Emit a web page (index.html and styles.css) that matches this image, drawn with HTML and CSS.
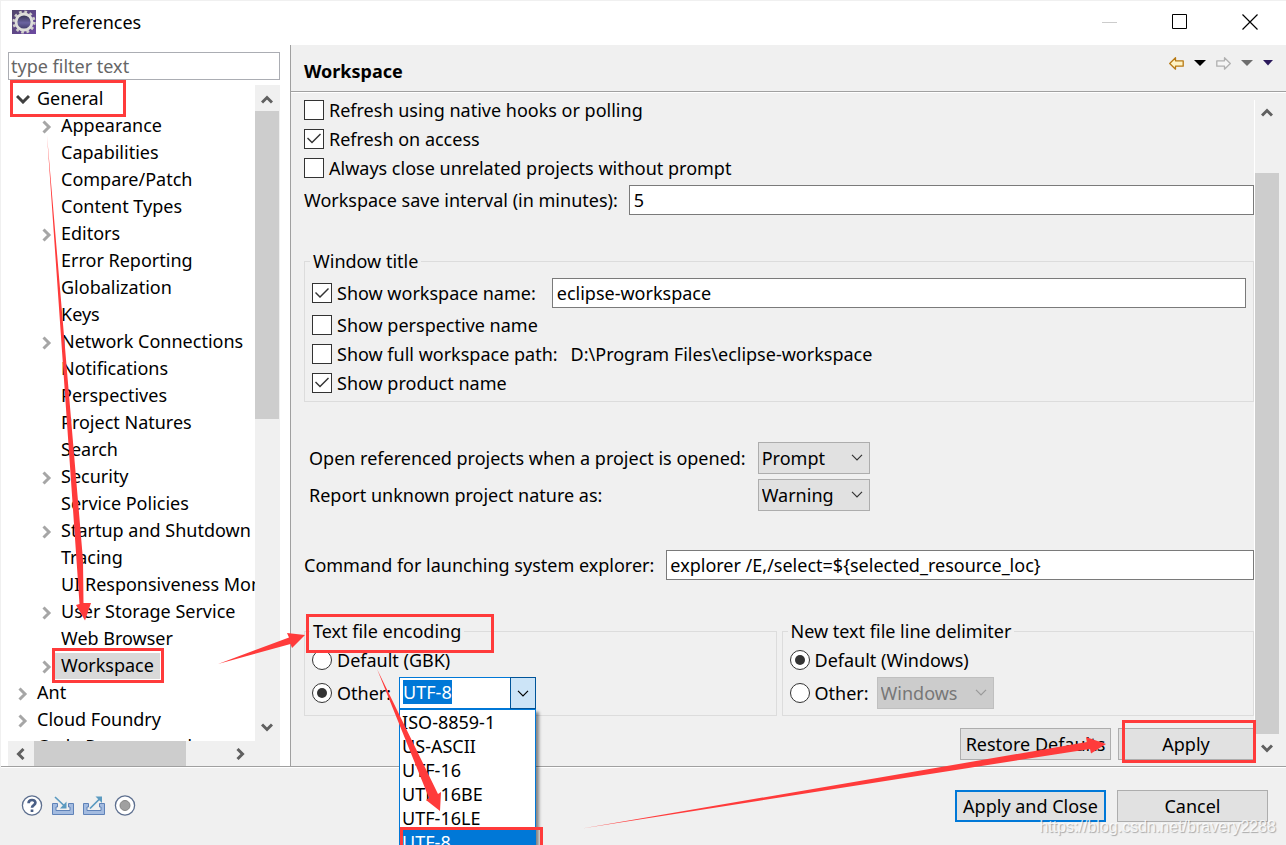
FILE: index.html
```html
<!DOCTYPE html>
<html lang="en">
<head>
<meta charset="utf-8">
<title>Preferences</title>
<link rel="stylesheet" href="styles.css">
</head>
<body>
<svg class="defs" aria-hidden="true">
  <symbol id="right" viewBox="0 0 10 14"><path d="M1.500 1.500 7 7l-5.500 5.500" fill="none" stroke="#a6a6a6" stroke-width="3"/></symbol>
  <symbol id="down" viewBox="0 0 14 10"><path d="M1 2l6 6 6-6" fill="none" stroke="#404040" stroke-width="3"/></symbol>
  <symbol id="sb" viewBox="0 0 12 10"><path d="M1 7.500l5-5 5 5" fill="none" stroke="#606060" stroke-width="3"/></symbol>
  <symbol id="thin" viewBox="0 0 12 7"><path d="M1 .8l5 5 5-5" fill="none" stroke="currentColor" stroke-width="1.200"/></symbol>
</svg>
<div class="window">
  <header class="titlebar">
    <svg class="app-icon" viewBox="0 0 24 24">
      <defs>
        <linearGradient id="pg" x1="0" y1="0" x2="1" y2="1"><stop offset="0" stop-color="#51466a"/><stop offset="1" stop-color="#6d4aa3"/></linearGradient>
        <linearGradient id="core" x1="0" y1="0" x2="0" y2="1"><stop offset="0" stop-color="#2d2b45"/><stop offset=".55" stop-color="#6a63a0"/><stop offset="1" stop-color="#3a3560"/></linearGradient>
      </defs>
      <rect width="24" height="24" fill="url(#pg)"/>
      <circle cx="12" cy="12" r="10.300" fill="none" stroke="#d0d0ca" stroke-width="2.600" stroke-dasharray="2.700 2.700"/>
      <circle cx="12" cy="12" r="8" fill="url(#core)" stroke="#dededa" stroke-width="2.800"/>
    </svg>
    <h1>Preferences</h1>
    <div class="controls">
      <button aria-label="Minimize"><svg width="16" height="16"><path d="M0 8.500h15" stroke="#ccc"/></svg></button>
      <button aria-label="Maximize"><svg width="16" height="16"><path d="M.5.5h14v14H.5z" fill="none" stroke="#000"/></svg></button>
      <button aria-label="Close"><svg width="16" height="16"><path d="M.5.5l15 15M15.500.5l-15 15" stroke="#000" stroke-width="1.200"/></svg></button>
    </div>
  </header>
  <div class="main">
    <nav class="side">
      <input class="filter" type="text" placeholder="type filter text" aria-label="Filter preferences">
      <div class="tree-area">
        <ul class="tree">
          <li class="root"><svg class="open"><use href="#down"/></svg><span>General</span></li>
          <li><svg><use href="#right"/></svg><span>Appearance</span></li>
          <li><span>Capabilities</span></li>
          <li><span>Compare/Patch</span></li>
          <li><span>Content Types</span></li>
          <li><svg><use href="#right"/></svg><span>Editors</span></li>
          <li><span>Error Reporting</span></li>
          <li><span>Globalization</span></li>
          <li><span>Keys</span></li>
          <li><svg><use href="#right"/></svg><span>Network Connections</span></li>
          <li><span>Notifications</span></li>
          <li><span>Perspectives</span></li>
          <li><span>Project Natures</span></li>
          <li><span>Search</span></li>
          <li><svg><use href="#right"/></svg><span>Security</span></li>
          <li><span>Service Policies</span></li>
          <li><svg><use href="#right"/></svg><span>Startup and Shutdown</span></li>
          <li><span>Tracing</span></li>
          <li><span>UI Responsiveness Monitoring</span></li>
          <li><svg><use href="#right"/></svg><span>User Storage Service</span></li>
          <li><span>Web Browser</span></li>
          <li class="selected"><svg><use href="#right"/></svg><span>Workspace</span></li>
          <li class="root"><svg><use href="#right"/></svg><span>Ant</span></li>
          <li class="root"><svg><use href="#right"/></svg><span>Cloud Foundry</span></li>
          <li class="root"><svg><use href="#right"/></svg><span>Code Recommenders</span></li>
        </ul>
        <div class="vbar tree-vbar"><svg><use href="#sb"/></svg><i></i><svg class="flip"><use href="#sb"/></svg></div>
      </div>
      <div class="hbar"><svg class="left"><use href="#sb"/></svg><i></i><svg class="rightward"><use href="#sb"/></svg></div>
    </nav>
    <section class="page">
      <header class="page-head">
        <h2>Workspace</h2>
        <div class="history">
          <button aria-label="Back"><svg width="15" height="13"><path d="M.7 6.500 6.500.8v3h7.700v5.400H6.500v3z" fill="#fff3c4" stroke="#b87a14" stroke-width="1.300" stroke-linejoin="round"/></svg></button>
          <button aria-label="Back history"><svg width="12" height="6"><path d="M0 0h12L6 6z"/></svg></button>
          <button aria-label="Forward"><svg width="15" height="13"><path d="M14.300 6.500 8.500.8v3H.8v5.400h7.700v3z" fill="#f5f5f5" stroke="#b0b0b0" stroke-width="1.300" stroke-linejoin="round"/></svg></button>
          <button aria-label="Forward history"><svg width="12" height="6"><path d="M0 0h12L6 6z" fill="#6e6e6e"/></svg></button>
          <button aria-label="Menu"><svg width="10" height="6"><path d="M0 0h10L5 5.500z" fill="#2b1a5c"/></svg></button>
        </div>
      </header>
      <div class="page-body">
        <form class="form">
          <label class="check"><input type="checkbox">Refresh using native hooks or polling</label>
          <label class="check"><input type="checkbox" checked>Refresh on access</label>
          <label class="check"><input type="checkbox">Always close unrelated projects without prompt</label>
          <div class="field interval"><label for="interval">Workspace save interval (in minutes):</label><input class="text" id="interval" type="text" value="5"></div>
          <fieldset class="title-group">
            <legend>Window title</legend>
            <div class="field name-row"><label class="check"><input type="checkbox" checked>Show workspace name:</label><input class="text" type="text" value="eclipse-workspace" aria-label="Workspace name"></div>
            <label class="check"><input type="checkbox">Show perspective name</label>
            <div class="path-row"><label class="check"><input type="checkbox">Show full workspace path:</label><span>D:\Program Files\eclipse-workspace</span></div>
            <label class="check"><input type="checkbox" checked>Show product name</label>
          </fieldset>
          <div class="choices">
            <label for="referenced">Open referenced projects when a project is opened:</label>
            <div class="pick"><select id="referenced"><option>Prompt</option></select><svg><use href="#thin"/></svg></div>
            <label for="nature">Report unknown project nature as:</label>
            <div class="pick"><select id="nature"><option>Warning</option></select><svg><use href="#thin"/></svg></div>
          </div>
          <div class="field command"><label for="command">Command for launching system explorer:</label><input class="text" id="command" type="text" value="explorer /E,/select=${selected_resource_loc}"></div>
          <div class="groups">
            <fieldset>
              <legend>Text file encoding</legend>
              <label class="check"><input type="radio" name="enc">Default (GBK)</label>
              <div class="other-row">
                <label class="check"><input type="radio" name="enc" checked>Other:</label>
                <div class="combo">
                  <div class="combo-value" role="combobox" aria-expanded="true" aria-label="Encoding" tabindex="0"><span>UTF-8</span></div>
                  <button type="button" aria-label="Show encodings"><svg><use href="#thin"/></svg></button>
                  <ul class="popup" role="listbox">
                    <li role="option">ISO-8859-1</li>
                    <li role="option">US-ASCII</li>
                    <li role="option">UTF-16</li>
                    <li role="option">UTF-16BE</li>
                    <li role="option">UTF-16LE</li>
                    <li role="option" class="active" aria-selected="true">UTF-8</li>
                  </ul>
                </div>
              </div>
            </fieldset>
            <fieldset>
              <legend>New text file line delimiter</legend>
              <label class="check"><input type="radio" name="delim" checked>Default (Windows)</label>
              <div class="other-row">
                <label class="check"><input type="radio" name="delim">Other:</label>
                <div class="pick disabled"><select disabled aria-label="Line delimiter"><option>Windows</option></select><svg><use href="#thin"/></svg></div>
              </div>
            </fieldset>
          </div>
          <div class="actions"><button class="btn restore" type="button">Restore Defaults</button><button class="btn apply" type="button">Apply</button></div>
        </form>
        <div class="vbar page-vbar"><svg><use href="#sb"/></svg><i></i><svg class="flip"><use href="#sb"/></svg></div>
      </div>
    </section>
  </div>
  <footer class="footer">
    <div class="tools">
      <button aria-label="Help"><svg width="22" height="22"><circle cx="11" cy="10.500" r="9.600" fill="#fff" stroke="#5d6f8f" stroke-width="1.300"/><path d="M7.600 8.200C7.600 4 14.400 4 14.400 7.800 14.400 10.200 11 10 11 12.800M11 14.400v2.600" fill="none" stroke="#4a5f86" stroke-width="2.700"/></svg></button>
      <button aria-label="Import"><svg width="22" height="22"><path d="M5.500 8.500h-5v11h21v-11h-5V12h1.500v3.500H4V12h1.500z" fill="#a3bbe0" stroke="#5f82b8"/><path d="M3 2l9.500 9" stroke="#5b9ac0" stroke-width="1.700"/><path d="M14.500 6.500v7H8z" fill="#5b9ac0"/></svg></button>
      <button aria-label="Export"><svg width="22" height="22"><path d="M5.500 8.500h-5v11h21v-11h-5V12h1.500v3.500H4V12h1.500z" fill="#a3bbe0" stroke="#5f82b8"/><path d="M7 13.500L17 3.500" stroke="#5b9ac0" stroke-width="1.700"/><path d="M12.500 1.500H19V8z" fill="#5b9ac0"/></svg></button>
      <button aria-label="Record"><svg width="22" height="22"><circle cx="11" cy="10.500" r="9.600" fill="#fff" stroke="#5d6f8f" stroke-width="1.300"/><circle cx="11" cy="10.500" r="5" fill="#a0a0a0" stroke="#858585"/></svg></button>
    </div>
    <div class="final"><button class="btn primary">Apply and Close</button><button class="btn">Cancel</button></div>
  </footer>
  <div class="watermark">https://blog.csdn.net/bravery2288</div>
  <svg class="marks" width="1286" height="845" aria-hidden="true">
    <g fill="none" stroke="#ff3b3b" stroke-width="3">
      <path d="M11.500 81.500h113v34h-113zM53.500 649.500h109v32h-109zM307.500 615.500h185v36h-185zM1123.500 721.500h131v40h-131zM401.500 828.500h140v20h-140z"/>
    </g>
    <g fill="#ff3b3b">
      <path d="M47 135L83 560 83.500 603 91 603 85 620.500 76 605 79.500 604 76.500 560z"/>
      <path d="M218 664L289 637.500 287 633 305 635 292 648 290.500 644z"/>
      <path d="M377 669L438 794 441 792 440 811 426 800 429 798z"/>
      <path d="M582 828.500L1087 742 1086 737 1106 744 1091 753.500 1090 749z"/>
    </g>
  </svg>
</div>
</body>
</html>
```

FILE: styles.css
```css
* { box-sizing: border-box; }
body, input, select, button { font-family: "Noto Sans", "Open Sans", sans-serif; font-size: 18px; line-height: 24px; color: #000; }
body { margin: 0; background: #f0f0f0; }
ul { list-style: none; margin: 0; padding: 0; }
button { border: 0; padding: 0; background: none; }
h1, h2 { margin: 0; font-size: 18px; }
svg { display: block; flex: none; }
.defs { position: absolute; width: 0; height: 0; }
.window { position: relative; display: flex; flex-direction: column; min-height: 100vh; overflow: hidden; border-left: 1px solid #f0f0f0; }

.titlebar { display: flex; align-items: center; height: 45px; padding: 0 28px 2px 11px; background: #fff; border-top: 1px solid #f0f0f0; }
.app-icon { width: 24px; height: 24px; }
.titlebar h1 { margin-left: 5px; font-weight: 400; }
.controls { display: flex; gap: 54px; margin-left: auto; }

.main { display: flex; flex: 1; border-bottom: 1px solid #a0a0a0; box-shadow: 0 1px #fff; }
.side { display: flex; flex-direction: column; width: 290px; padding: 7px 10px 0 7px; background: #fff; border-right: 1px solid #a0a0a0; }
.filter { height: 28px; padding: 0 2px; border: 1px solid #abadb3; outline: 0; }
.filter::placeholder { color: #666; opacity: 1; }
.tree-area { display: flex; flex: 1 1 0; min-height: 0; margin-top: 5px; }
.tree { flex: 1; min-width: 0; overflow: hidden; }
.tree li { position: relative; height: 27px; padding: 1px 0 0 51px; white-space: nowrap; }
.tree li.root { padding-left: 27px; }
.tree li svg { position: absolute; left: 34px; top: 8px; width: 10px; height: 14px; }
.tree li.root svg { left: 10px; }
.tree li.root svg.open { left: 8px; top: 9px; width: 14px; height: 10px; }
.tree li span { display: inline-block; padding: 0 2px; }
.tree .selected span { height: 26px; padding: 0 6px 0 6px; margin-left: -4px; background: #d9d9d9; }

.vbar { display: flex; flex-direction: column; align-items: center; width: 25px; background: #f0f0f0; }
.vbar svg, .hbar svg { width: 12px; height: 10px; }
.vbar i, .hbar i { background: #cdcdcd; }
.vbar i { width: 24px; }
.flip { margin-top: auto; transform: rotate(180deg); }
.tree-vbar { padding: 10px 1px 9px 0; }
.tree-vbar i { height: 308px; margin-top: 6px; }
.hbar { display: flex; align-items: center; height: 25px; padding: 0 34px 0 7px; background: #f0f0f0; }
.hbar i { width: 152px; height: 25px; margin-left: 7px; }
.hbar .left { transform: rotate(-90deg); }
.hbar .rightward { margin-left: auto; transform: rotate(90deg); }

.page { display: flex; flex: 1; flex-direction: column; min-width: 0; }
.page-head { display: flex; align-items: center; justify-content: space-between; height: 47px; padding: 5px 13px 0 13px; border-bottom: 1px solid #a0a0a0; box-shadow: 0 1px #fff; }
.history { display: flex; align-items: center; gap: 10px; height: 24px; padding-bottom: 15px; }
.page-body { display: flex; flex: 1; padding: 3px 7px 4px 13px; }
.form { flex: 1; min-width: 0; }
.check { display: flex; align-items: center; gap: 5px; height: 29px; white-space: nowrap; }
.check input { appearance: none; position: relative; flex: none; width: 20px; height: 20px; margin: 0; background: #fff; border: 1px solid #333; }
.check input[type="radio"] { border-radius: 50%; }
.check input:checked::after { content: ""; position: absolute; inset: 0; background: #333; clip-path: polygon(2px 9px, 3px 8px, 7px 12px, 15px 4px, 16px 5px, 7px 14px); }
.check input[type="radio"]:checked::after { inset: 4px; border-radius: 50%; clip-path: none; }
.text { flex: 1; min-width: 0; height: 30px; padding: 0 4px; border: 1px solid #7a7a7a; background: #fff; outline: 0; }
.field { display: flex; align-items: center; white-space: nowrap; }
.field label { flex: none; }
.interval { gap: 11px; margin-top: 3px; }
fieldset { min-width: 0; margin: 0; padding: 0 7px 4px; border: 1px solid #dcdcdc; }
legend { height: 24px; margin-left: -2px; padding: 0 3px; }
.title-group { margin-top: 34px; }
.name-row { gap: 16px; height: 30px; margin: 5px 0 2px; }
.path-row { display: flex; align-items: center; gap: 13px; }
.choices { display: grid; grid-template-columns: max-content 112px; gap: 5px 12px; align-items: center; margin: 40px 0 0 5px; }
.pick { position: relative; width: 112px; }
.pick select { appearance: none; display: block; width: 100%; height: 32px; padding: 0 3px; border: 1px solid #adadad; border-radius: 0; background: #e1e1e1; }
.pick svg { position: absolute; right: 7px; top: 12px; width: 12px; height: 7px; color: #333; pointer-events: none; }
.pick.disabled { width: 117px; }
.pick.disabled select { color: #777; background: #ccc; border-color: #bfbfbf; opacity: 1; }
.pick.disabled svg { color: #999; }
.command { gap: 12px; margin-top: 39px; }
.command .text { padding: 0 3px; }
.groups { display: grid; grid-template-columns: 1fr 1fr; gap: 5px; margin-top: 39px; }
.groups legend + .check { margin: 2px 0 1px; }
.other-row { display: flex; align-items: center; gap: 8px; height: 36px; }
.combo { position: relative; display: flex; width: 137px; height: 32px; border: 1px solid #0078d7; background: #fff; }
.combo-value { flex: 1; padding: 2px 3px; }
.combo-value span { background: #0078d7; color: #fff; }
.combo button { display: grid; place-items: center; width: 26px; margin: -1px; background: #cce4f7; border: 1px solid #005499; }
.combo button svg { width: 12px; height: 7px; }
.popup { position: absolute; z-index: 2; left: -1px; right: -1px; top: 31px; border: 1px solid #0078d7; background: #fff; box-shadow: 3px 3px 3px rgba(0, 0, 0, .45); }
.popup li { height: 24px; padding: 0 2px; }
.popup .active { background: #0078d7; color: #fff; }
.actions { display: flex; justify-content: flex-end; gap: 7px; margin-top: 12px; }
.btn { min-width: 151px; height: 32px; border: 1px solid #adadad; background: #e1e1e1; white-space: nowrap; }
.actions .apply { min-width: 136px; }
.primary { border: 2px solid #0078d7; }
.page-vbar { margin: 5px 0 0; padding: 8px 0 9px; border-left: 1px solid #fff; }
.page-vbar i { flex: 1; margin: 55px 0 9px; }

.footer { display: flex; align-items: center; justify-content: space-between; height: 78px; padding: 0 18px 0 20px; }
.tools { display: flex; gap: 9px; }
.final { display: flex; gap: 11px; }
.watermark { position: absolute; right: 10px; bottom: 6px; font: 16px/24px "Liberation Sans", sans-serif; color: rgba(255, 255, 255, .8); text-shadow: 1px 1px 1px rgba(0, 0, 0, .3); }
.marks { position: absolute; z-index: 3; left: -1px; top: 0; pointer-events: none; }
```
